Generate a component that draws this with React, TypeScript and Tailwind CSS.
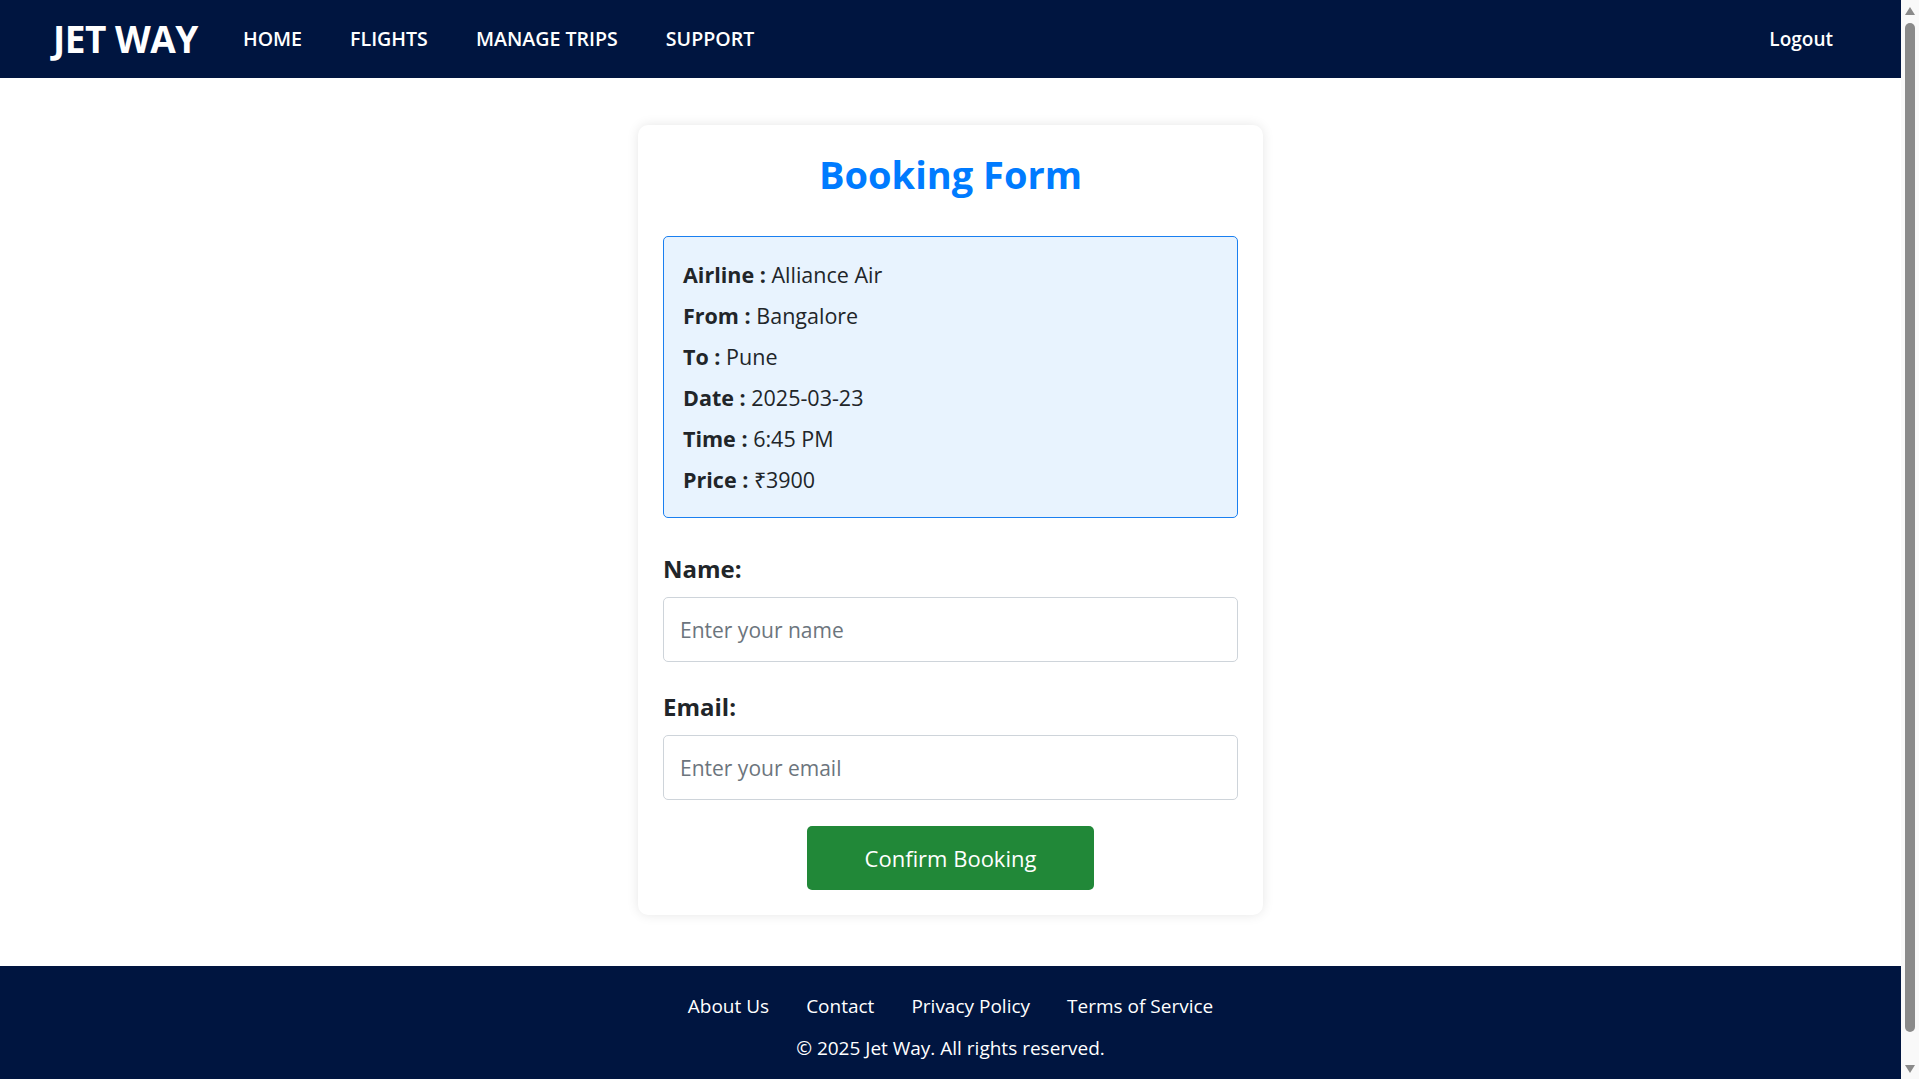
export default function App() {
  const details = [
    ["Airline", "Alliance Air"],
    ["From", "Bangalore"],
    ["To", "Pune"],
    ["Date", "2025-03-23"],
    ["Time", "6:45 PM"],
    ["Price", "₹3900"],
  ];

  return (
    <div className="min-h-screen flex flex-col bg-white pr-[18px] font-['Open_Sans',sans-serif] text-[#212529]">
      <header className="h-[78px] bg-[#001540] flex items-center pl-[53px] pr-[68px] text-white">
        <span className="text-[37px] font-bold tracking-[-0.5px]">JET WAY</span>
        <nav className="flex items-center gap-[48px] ml-[45px] text-[19.6px] font-semibold">
          <a href="#">HOME</a>
          <a href="#">FLIGHTS</a>
          <a href="#">MANAGE TRIPS</a>
          <a href="#">SUPPORT</a>
        </nav>
        <a href="#" className="ml-auto text-[19px] font-semibold">
          Logout
        </a>
      </header>

      <main className="flex justify-center pt-[47px] pb-[51px]">
        <div className="w-[625px] bg-white rounded-[10px] shadow-[0_0_12px_rgba(0,0,0,0.1)] p-[25px]">
          <h2 className="text-center text-[38px] leading-[48px] font-bold text-[#007bff]">
            Booking Form
          </h2>

          <div className="mt-[38px] bg-[#e8f3fe] border border-[#1a7ff0] rounded-[5px] px-[19px] py-[17px] text-[21.5px] leading-[41px]">
            {details.map(([k, v]) => (
              <p key={k}>
                <strong className="font-bold">{k} :</strong> {v}
              </p>
            ))}
          </div>

          <form className="mt-[33px] flex flex-col">
            <label htmlFor="name" className="text-[24px] leading-[36px] font-bold">
              Name:
            </label>
            <input
              id="name"
              type="text"
              placeholder="Enter your name"
              className="mt-[10px] h-[65px] border border-[#ced4da] rounded-[5px] px-[16px] text-[21px] placeholder:text-[#6c757d] outline-none"
            />
            <label htmlFor="email" className="mt-[27px] text-[24px] leading-[36px] font-bold">
              Email:
            </label>
            <input
              id="email"
              type="email"
              placeholder="Enter your email"
              className="mt-[10px] h-[65px] border border-[#ced4da] rounded-[5px] px-[16px] text-[21px] placeholder:text-[#6c757d] outline-none"
            />
            <button
              type="button"
              className="mt-[26px] self-center w-[287px] h-[64px] bg-[#218838] text-white rounded-[5px] text-[22px]"
            >
              Confirm Booking
            </button>
          </form>
        </div>
      </main>

      <footer className="bg-[#001540] text-white pt-[25px] pb-[50px] text-center">
        <div className="flex justify-center gap-[37px] text-[19px] leading-[30px]">
          <a href="#">About Us</a>
          <a href="#">Contact</a>
          <a href="#">Privacy Policy</a>
          <a href="#">Terms of Service</a>
        </div>
        <p className="mt-[12px] text-[19px] leading-[30px]">© 2025 Jet Way. All rights reserved.</p>
      </footer>

      {/* browser scrollbar */}
      <div className="fixed top-0 right-0 h-screen w-[18px] bg-[#f9f9f9] flex flex-col items-center">
        <svg width="10" height="8" viewBox="0 0 10 8" className="mt-[7px]">
          <path d="M5 0 L10 8 L0 8 Z" fill="#8a8a8a" />
        </svg>
        <div className="mt-[8px] w-[10px] flex-1 rounded-full bg-[#8a8a8a]" />
        <svg width="10" height="8" viewBox="0 0 10 8" className="mt-[33px] mb-[6px]">
          <path d="M0 0 L10 0 L5 8 Z" fill="#8a8a8a" />
        </svg>
      </div>
    </div>
  );
}
